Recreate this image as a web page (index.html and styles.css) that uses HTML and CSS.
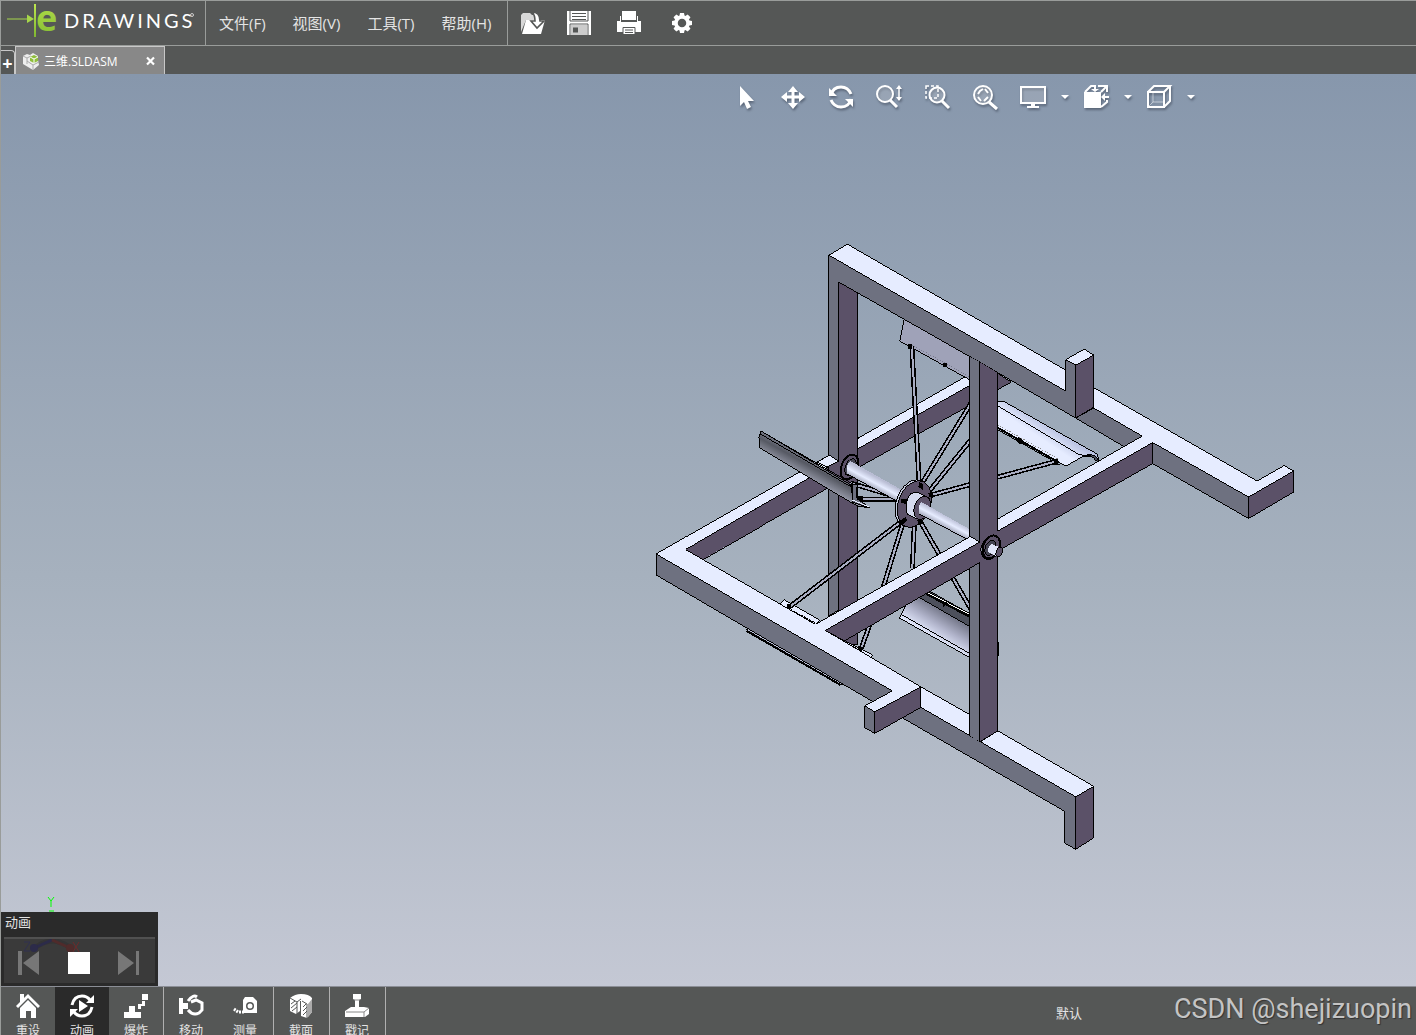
FILE: index.html
```html
<!DOCTYPE html>
<html lang="zh-CN">
<head>
<meta charset="utf-8">
<title>eDrawings - 三维.SLDASM</title>
<link rel="stylesheet" href="styles.css">
</head>
<body>
<div class="app">
<header class="menubar">
  <div class="logo">
    <svg width="204" height="44" viewBox="1 1 204 44" role="img" aria-label="eDrawings">
      <defs><linearGradient id="lime" x1="0" y1="0" x2="0" y2="1"><stop offset="0" stop-color="#bde64f"/><stop offset="1" stop-color="#7fb830"/></linearGradient></defs>
      <path d="M7 18.500h20v-4l7 4.500-7 4v-3.500H7z" fill="#a6d64a"/>
      <rect x="34" y="4" width="2" height="33" fill="url(#lime)"/>
      <text class="logo-e" x="36" y="31" fill="url(#lime)">e</text>
      <text class="logo-name" x="64" y="28">DRAWINGS</text>
      <circle cx="192" cy="15" r="1.500" fill="none" stroke="#ccc"/>
    </svg>
  </div>
  <nav class="menus">
    <button>文件(F)</button><button>视图(V)</button><button>工具(T)</button><button>帮助(H)</button>
  </nav>
  <div class="file-tools">
    <button aria-label="打开"><svg width="26" height="26" viewBox="0 0 26 26"><path d="M1 5l2-2h7l2 2h6v5H6L1 22z" fill="#d8d8d8"/><path d="M6 10h19l-4 14H2z" fill="#fff"/><path d="M12 2c6 0 8 3 8 9h4l-7 7-6-7h4c0-5-1-7-3-9z" fill="#fff" stroke="#555756" stroke-width="1.600"/></svg></button>
    <button aria-label="保存"><svg width="26" height="26" viewBox="0 0 26 26"><path d="M1 1h24v24H1z" fill="#fff"/><path d="M4 1v10h18V1M4 25V14h18v11" fill="none" stroke="#555756"/><path d="M6 3.500h14M6 6.500h14M6 9.500h14" stroke="#555756"/><path d="M5 15h16v10H5z" fill="#ccc"/><path d="M7 17.500h5v5H7z" fill="#555756"/></svg></button>
    <button aria-label="打印"><svg width="26" height="26" viewBox="0 0 26 26"><path d="M6 1h14v9H6zM1 11h3V6h1v5h16V6h1v5h3v11H1z" fill="#fff"/><path d="M5 11.500h16" stroke="#555756"/><path d="M7 17.500h12v7H7z" fill="#fff" stroke="#555756"/><path d="M9 20h8M9 22.500h8" stroke="#555756"/></svg></button>
    <button aria-label="选项"><svg width="24" height="24" viewBox="-12 -12 24 24"><g fill="#fff"><path id="tooth" d="M-2-10h4l1 5h-6zM-2 10h4l1-5h-6z"/><use href="#tooth" transform="rotate(45)"/><use href="#tooth" transform="rotate(90)"/><use href="#tooth" transform="rotate(135)"/></g><circle r="6" fill="none" stroke="#fff" stroke-width="3.500"/></svg></button>
  </div>
</header>
<div class="tabs">
  <button class="tab-add" aria-label="新建标签">+</button>
  <div class="tab">
    <svg width="18" height="18" viewBox="0 0 18 18"><path d="M1 4l4-2 3 1 3-2 5 3v4l1 5-6 5L1 12z" fill="#eee"/><path d="M1 4l4 2v6M5 6l4-2M5 9l6 4v5M11 13l6-3" fill="none" stroke="#aaa"/><path d="M8 5l4-2 4 2v4l-4 2-4-2z" fill="#8fbf3b"/><path d="M8 5l4 2 4-2M12 7v4" fill="none" stroke="#fff"/></svg>
    <span>三维.SLDASM</span>
    <button class="tab-close" aria-label="关闭"><svg width="10" height="10" viewBox="0 0 10 10"><path d="M1 1.500l7 7M8 1.500l-7 7" stroke="#fff" stroke-width="2.200"/></svg></button>
  </div>
</div>
<main class="viewport">
<svg class="model" viewBox="0 74 1416 912" preserveAspectRatio="xMidYMid meet" role="img" aria-label="三维模型">
  <defs>
    <linearGradient id="blade" gradientUnits="userSpaceOnUse" x1="814" y1="459" x2="803" y2="479"><stop offset="0" stop-color="#7a7d8c"/><stop offset=".35" stop-color="#565963"/><stop offset="1" stop-color="#a2a5b5"/></linearGradient>
    <linearGradient id="bladeR" gradientUnits="userSpaceOnUse" x1="1053" y1="425" x2="1043" y2="440"><stop offset="0" stop-color="#b4bddd"/><stop offset="1" stop-color="#e6ecff"/></linearGradient>
    <linearGradient id="bladeB" gradientUnits="userSpaceOnUse" x1="945" y1="613" x2="930" y2="637"><stop offset="0" stop-color="#777a8c"/><stop offset=".5" stop-color="#b0b3ca"/><stop offset="1" stop-color="#e6ecff"/></linearGradient>
    <linearGradient id="shaft" gradientUnits="userSpaceOnUse" x1="887" y1="483" x2="880" y2="496"><stop offset="0" stop-color="#b9bdd4"/><stop offset=".4" stop-color="#e6ecff"/><stop offset="1" stop-color="#7d8093"/></linearGradient>
    <linearGradient id="shaftR" gradientUnits="userSpaceOnUse" x1="947" y1="516" x2="940" y2="529"><stop offset="0" stop-color="#b9bdd4"/><stop offset=".4" stop-color="#e6ecff"/><stop offset="1" stop-color="#7d8093"/></linearGradient>
  </defs>
  <!-- rear beam -->
  <path class="top" d="M817 462l12-7 9 6 20-23L980 368V380L857 449 838 472z"/>
  <path class="side" d="M857 449L970 385 997 373 1011 382 857 468z"/>
  <path class="top" d="M655.500 554L829 455l9 6L685 549.500z"/>
  <path class="side" d="M685 549.500L838 461v21L702 559.500z"/>
  <!-- upper blade -->
  <path d="M904 318l-4.500 23 70.500 39v-30z" fill="#9fa2b8" class="edge"/>
  <path d="M912 345l58 32" fill="none" stroke="#777a8c" stroke-dasharray="1 1"/>
  <!-- rear post -->
  <path class="front" d="M828.500 255l10 10v345l-10 6z"/>
  <path class="side" d="M838.500 275h19v370h-19z"/>
  <path d="M829 486V458l9 4 19-24v31l-19 11z" fill="#5b5168"/>
  <path class="top" d="M817 462l12-7 9 6-11 6z"/>
  <path class="line" d="M828.500 487v129M838.500 483v127M857.500 438v10"/>
  <!-- right blade -->
  <path d="M997 401h6l94 53 2 8-7-6h-9l-17 10-6-3-63-36z" fill="url(#bladeR)" class="edge"/>
  <path class="line" d="M998 406l80 48 8 2M998 430l62 35"/>
  <path d="M1086 455q10-2 13 7l-4-2q-3-5-9-5z" fill="#4d505c" class="edge"/>
  <path d="M998 425l60 34" fill="none" stroke="#888" stroke-dasharray="1 1"/>
  <path d="M998 428l60 34" fill="none" stroke="#000" stroke-width="2"/>
  <!-- lower blade -->
  <path d="M918 597l11-6 41 23v15z" fill="#4d505c" class="edge"/>
  <path d="M926 593l44 23" fill="none" stroke="#000" stroke-width="4"/><path d="M928 593l42 22" fill="none" stroke="#fff"/>
  <path d="M918 597l52 30v31l-71-40 8-15z" fill="url(#bladeB)" class="edge"/>
  <path class="line" d="M902 615l68 39"/>
  <!-- lower-left blade -->
  <path d="M779 604l5-4 35 20-5 8zM846 642l26 13-3 5-26-11z" fill="#e6ecff" class="edge"/>
  <path d="M790 610l24 13M846 644l16 8" stroke="#000" fill="none" stroke-width="2" stroke-dasharray="2 1"/>
  <path d="M746 630l4-2 98 56-7 1z" fill="#b9bdd4" class="edge"/><path d="M746 631l94 54" stroke="#000" stroke-width="2"/>
  <!-- wheel disc, shaft and spokes -->
  <g class="spoke-edge"><path id="spokes" d="M911.500 346L919 487M972 401L920 486M972 438L929 491M1057 461L931 495M861 499h43M850 483l50 15M789 607L899 523M902 525L882 590 861 648M914 524l-2 44M919 520l52 90"/></g>
  <use class="spoke-face" href="#spokes"/>
  <ellipse cx="849" cy="467" rx="8" ry="13" transform="rotate(22 849 467)" fill="#5b5168" class="rim"/>
  <ellipse cx="850" cy="467" rx="5" ry="9" transform="rotate(22 850 467)" fill="#444452" class="edge"/>
  <path d="M850 461l64 36-6 11-61-34q-2-9 3-13z" fill="url(#shaft)"/><path class="line" d="M847 474l55 30"/>
  <ellipse cx="911" cy="503" rx="15" ry="24" transform="rotate(20 911 503)" fill="#c3c9dd" class="edge"/>
  <ellipse cx="914" cy="504" rx="16" ry="24" transform="rotate(20 914 504)" fill="#5b5168" class="edge"/>
  <path d="M910 494q5-3 9-1l10 5q-1 18-12 21l-10-5q-4-10 3-20z" fill="#d6dbef" class="edge"/>
  <ellipse cx="922" cy="508" rx="8" ry="12" transform="rotate(20 922 508)" fill="#5b5168" class="edge"/>
  <path d="M921 502l55 31-5 10-52-29q-2-8 2-12z" fill="url(#shaftR)"/><path class="line" d="M919 514l51 27"/>
  <path d="M918 487l1-5 4 2v6zM928 493l5-1v6l-4-1zM901 499h6v5l-6-1zM898 522l7-5 2 3-5 5zM917 520h5v4h-4zM908 344h4v5h-4zM943 363h4v4h-4zM787 604h4v5h-4zM858 646l5 1-1 4h-4zM1053 459h5v6h-4zM1018 437l5 3-2 5-4-3zM858 496h5v5h-5zM942 601l6 2-5 4zM997 642h2v14h-2z"/>
  <!-- left blade -->
  <path d="M760.500 431l-2 6 1 11 92 55 6 3 12 2-17-9-2-14z" fill="url(#blade)" class="edge"/>
  <path class="line" d="M760 434l91 53M760.500 431l92 53"/>
  <path d="M852 484v18l18 6-13-9q-3-8 1-15z" fill="#6e7180" class="edge"/><path d="M852 500l17 7" stroke="#e6ecff"/>
  <!-- upper cross beam -->
  <path class="top" d="M828.500 255L847 244 1065.500 370V391z"/>
  <path class="front" d="M828.500 255L1065.500 391V359.500l10 5.500v53L979.500 362 969.500 356.500 838.500 282V294l-10 3z"/>
  <path d="M829 290h9v25h-9z" fill="#6e7180"/>
  <path class="line" d="M828.500 255v70M838.500 282v40"/>
  <path class="top" d="M1065.500 359.500L1084 349l9.500 6-18 10z"/>
  <path class="side" d="M1075.500 365l18-10v52l-18 11z"/>
  <!-- right frame -->
  <path class="front" d="M1075.500 418l18-10 49 28-18 11z"/>
  <path class="top" d="M1093.500 387.500L1257 481l27-15.500 9.500 5.500-45 26-96-54.500-155 89V519L1142 436l-48.500-28z"/>
  <path class="side" d="M1152.500 442.500v21L997.500 551v-20z"/>
  <path class="front" d="M1152.500 442.500l96 54.500v21.500l-96-55z"/>
  <path class="side" d="M1248.500 497l45-26v21l-45 26.500z"/>
  <!-- lower beams -->
  <path class="front" d="M902 718l18.500-10.500L1075.500 797v52.500l-11-6v-32z"/>
  <path class="top" d="M920.500 687L970 715l10 27 17.500-11 96 55.500-18 10.500-155-89.500z"/>
  <path class="side" d="M1075.500 797l18-10.500V838l-18 11.500z"/>
  <!-- front post -->
  <path d="M969.500 357l10 5v380l-10-6z" fill="#6e7180"/>
  <path d="M979.500 362l18 11v358l-18 11z" fill="#5b5168"/>
  <path class="line" d="M969.500 357v379M979.500 362v380M997.500 373v158M997.500 551v180M979.500 742l18-11"/>
  <!-- middle beam -->
  <path class="side" d="M825 630.500L979.500 542v20.500L844 641z"/>
  <path d="M979 542l18-11v20l-18 11z" fill="#5b5168"/>
  <path class="top" d="M815 624.500l155-88 9.500 5.500L825 630.500z"/>
  <!-- long left beam -->
  <path class="front" d="M655.500 554L892 691l-19 11-217.500-127z"/>
  <path d="M655.500 554L685 537l10 7-10 5.500L815 624.500h5l5 6L920.500 687l-46 25-10-6L892 691z" fill="#e6ecff"/>
  <path class="line" d="M655.500 554L685 537M694 544.500l-9 5L815 624.500M825 630.500L920.500 687l-46 25-10-6L892 691 655.500 554"/>
  <path class="side" d="M874.500 712l46-25v20.500l-46 26z"/>
  <path class="front" d="M864.500 706l10 6v21.500l-10-5.500z"/>
  <!-- end bearing -->
  <ellipse cx="990" cy="548" rx="9" ry="12" transform="rotate(22 990 548)" fill="#8a8d9f" class="edge"/>
  <ellipse cx="991" cy="547" rx="8" ry="12" transform="rotate(22 991 547)" fill="#5b5168" class="rim"/>
  <ellipse cx="990" cy="548" rx="5" ry="8" transform="rotate(22 990 548)" fill="#444452" class="edge"/>
  <path d="M991 544l10 4-3 9-10-5q-1-5 3-8z" fill="#dfe4f8"/><ellipse cx="999" cy="552" rx="3" ry="5" transform="rotate(20 999 552)" fill="#5b5168" class="edge"/>
</svg>
<div class="view-tools">
  <button aria-label="选择"><svg width="28" height="28" viewBox="0 0 28 28"><path d="M9 3v20l4-4 3 7 4-2-3-6h6z"/></svg></button>
  <button aria-label="平移"><svg width="28" height="28" viewBox="0 0 28 28"><path d="M14 3l5 6h-3.500v3.500H20V9l6 5-6 5v-3.500h-4.500V20H19l-5 6-5-6h3.500v-4.500H8V19l-6-5 6-5v3.500h4.500V9H9z"/></svg></button>
  <button aria-label="旋转"><svg width="28" height="28" viewBox="0 0 28 28"><g class="outline" stroke-width="3"><path d="M4 12q2-8 10-8 7 0 10 7M24 16q-2 8-10 8-7 0-10-7"/></g><path d="M2 5v8h8zM26 24v-8h-8z"/></svg></button>
  <button aria-label="缩放"><svg width="28" height="28" viewBox="0 0 28 28"><circle cx="10" cy="11" r="8" class="lens"/><path class="outline" stroke-width="3" d="M15 17l7 7"/><path class="outline" stroke-width="1.500" d="M24 4v13"/><path d="M24 2l3 4h-6zM24 18l3-4h-6z"/></svg></button>
  <button aria-label="局部放大"><svg width="28" height="28" viewBox="0 0 28 28"><path class="outline" stroke-width="1.500" stroke-dasharray="3 2" d="M3 3h12v12H3z"/><circle cx="14" cy="12" r="7.500" class="lens"/><path class="outline" stroke-width="3" d="M19 18l7 7"/></svg></button>
  <button aria-label="整屏显示"><svg width="28" height="28" viewBox="0 0 28 28"><circle cx="12" cy="12" r="9" class="lens"/><path class="outline" stroke-width="3" d="M18 19l8 7"/><path class="outline" stroke-width="2" d="M7 11l2-3 3-2M14 6l3 4M7 14l3 4M13 18l4-4"/></svg></button>
  <div class="drop"><button aria-label="显示模式"><svg width="28" height="28" viewBox="0 0 28 28"><path class="lens" d="M2 4h24v16H2z"/><path d="M12 20h4v3h4v2H8v-2h4z"/></svg></button><button class="caret" aria-label="展开"></button></div>
  <div class="drop"><button aria-label="视图方向"><svg width="28" height="28" viewBox="0 0 28 28"><path d="M2 9h17v16H2z"/><path class="outline" stroke-width="2" d="M3 9l6-6h3M16 3h9v6M25 17v2l-6 5M19 9l6-6"/><path d="M12 2h2v4h3l-4 3-4-3h3zM27 13v2h-4v3l-4-4 4-4v3z"/></svg></button><button class="caret" aria-label="展开"></button></div>
  <div class="drop"><button aria-label="显示样式"><svg width="28" height="28" viewBox="0 0 28 28"><path class="outline" stroke-width="2" d="M3 9h16v15H3zM3 9l6-6h16l-6 6M25 3v15l-6 6"/><path class="outline" d="M8 9v10h11M8 19l-5 5" opacity=".5"/></svg></button><button class="caret" aria-label="展开"></button></div>
</div>
<svg class="triad" width="20" height="20" viewBox="0 0 20 20" role="img" aria-label="Y"><path d="M7 3l3 4 3-4M10 7v6M8 17h5" stroke="#0f0" fill="none"/></svg>
<section class="anim">
  <h2>动画</h2>
  <div class="player">
    <svg class="axes" width="60" height="18" viewBox="0 0 60 18" aria-hidden="true"><path d="M12 10Q30-6 50 10" stroke="#343435" stroke-width="5" fill="none"/><path d="M2 3h6L2 12h6" stroke="#303050" fill="none"/><path d="M12 9l18-8" stroke="#2c2b49" stroke-width="3"/><path d="M30 1l18 8" stroke="#4f2b2b" stroke-width="3"/><circle cx="12" cy="9" r="4" fill="#2c2b49"/><circle cx="48" cy="9" r="4" fill="#4f2b2b"/><path d="M51 3l6 10M57 3l-6 10" stroke="#6d2a2a"/></svg>
    <button aria-label="上一步"><svg width="24" height="24" viewBox="0 0 24 24" fill="#777"><path d="M1 0h4v24H1zM22 0v24L6 12z"/></svg></button>
    <button aria-label="停止"><svg width="24" height="24" viewBox="0 0 24 24"><path d="M1 1h22v22H1z" fill="#fff"/></svg></button>
    <button aria-label="下一步"><svg width="24" height="24" viewBox="0 0 24 24" fill="#777"><path d="M19 0h3v24h-3zM1 0v24l16-12z"/></svg></button>
  </div>
</section>
</main>
<footer class="toolbar">
  <div class="group">
    <button><svg width="26" height="26" viewBox="0 0 26 26"><path d="M13 1l12 12-2 2L13 5 3 15l-2-2 4-4V1h4v4z"/><path d="M13 7l8 8v10h-5v-7h-5v7H5V15z"/></svg>重设</button>
    <button class="active"><svg width="26" height="26" viewBox="0 0 26 26"><path class="outline" stroke-width="3" d="M3 12q2-9 10-9 5 0 8 4M23 14q-2 9-10 9-5 0-8-4"/><path d="M25 2v8h-8zM1 24v-8h8zM10 7l9 6-9 6z"/></svg>动画</button>
    <button><svg width="26" height="26" viewBox="0 0 26 26"><path d="M1 19h5v-6h6v6h6v6H1zM19 1h6v6h-6zM15 16v-5h4V8h3v5h-4v3z"/></svg>爆炸</button>
  </div>
  <div class="group">
    <button><svg width="26" height="26" viewBox="0 0 26 26"><path d="M1 5h4v5h5v6H5v5H1z"/><path class="outline" stroke-width="3" d="M10 8q5-7 9-4M10 17q5 6 11 3l3-3v-7l-6-3-5 2"/></svg>移动</button>
    <button><svg width="26" height="26" viewBox="0 0 26 26"><path d="M11 7l2-3h8l4 4v12H11z"/><circle cx="18" cy="13" r="4" fill="#555756"/><circle cx="18" cy="13" r="2.500"/><path class="outline" stroke-width="3" stroke-dasharray="2 1" d="M2 16l4 3h6"/></svg>测量</button>
  </div>
  <div class="group">
    <button><svg width="26" height="26" viewBox="0 0 26 26"><path d="M2 5q5-4 11-4 8 0 11 4v14l-5 6-6-2V8h-1v10l-4 3-6-3z"/><path d="M2 5l7 4v12M9 9l4-3M14 8l5 3v14M3 11l4-3M3 15l6-5M4 18l5-4M15 14l3-3M15 18l4-4M15 22l4-4" stroke="#555756" fill="none"/><path d="M20 11l4-5v13l-4 5z" fill="#aaa"/></svg>截面</button>
  </div>
  <div class="group">
    <button><svg width="26" height="26" viewBox="0 0 26 26"><path d="M9 1h8v5l-2 1v7h5l5 1v6l-4 3H1v-6l6-4h4V7L9 6z"/><path d="M2 19h18l5-4M20 19v5M10 7h6" stroke="#888" fill="none"/></svg>戳记</button>
  </div>
  <span class="config">默认</span>
  <span class="mark">CSDN @shejizuopin</span>
</footer>
</div>
</body>
</html>
```

FILE: styles.css
```css
* { box-sizing: border-box; }
body {
  margin: 0;
  font-family: "Open Sans", "Noto Sans CJK SC", sans-serif;
  color: #e4e4e4;
  background: #555756;
}
button {
  padding: 0;
  border: 0;
  background: none;
  color: inherit;
  font: inherit;
}
svg { display: block; }
.app {
  display: flex;
  flex-direction: column;
  height: 100vh;
  overflow: hidden;
  border-top: 1px solid #999c9a;
  border-left: 1px solid #999c9a;
}
.menubar {
  display: flex;
  flex: none;
  height: 45px;
  border-bottom: 1px solid #999c9a;
}
.logo { border-right: 1px solid #999c9a; }
.logo svg { overflow: visible; }
.logo-e { font: bold 36px "Open Sans", sans-serif; }
.logo-name { font: 20px Lato, sans-serif; letter-spacing: 3px; fill: #fff; }
.menus {
  display: flex;
  gap: 27px;
  padding: 0 16px 2px 13px;
  border-right: 1px solid #999c9a;
  font-size: 15px;
}
.file-tools {
  display: grid;
  grid-template-columns: 46px 50px 54px 24px;
  align-items: center;
  padding-left: 12px;
}
.tabs {
  display: flex;
  flex: none;
  height: 28px;
  font-size: 12px;
}
.tab-add {
  width: 14px;
  height: 24px;
  margin-top: 4px;
  border-top: 1px solid #c8c8c8;
  border-right: 1px solid #c8c8c8;
  border-radius: 0 4px 0 0;
  color: #fff;
  font-size: 18px;
  font-weight: bold;
  line-height: 24px;
}
.tab {
  display: flex;
  align-items: center;
  gap: 4px;
  width: 150px;
  padding: 0 8px 0 6px;
  border: 1px solid #c8c8c8;
  border-bottom: 0;
  background: #888;
  color: #fff;
}
.tab-close { margin-left: auto; }
.viewport {
  position: relative;
  flex: 1;
  min-height: 0;
  background: linear-gradient(#8797ac, #a6b1be 55%, #c4c8d4);
}
.model { width: 100%; height: 100%; shape-rendering: crispEdges; }
.top, .front, .side, .edge { stroke: #000; }
.top { fill: #e6ecff; }
.front { fill: #6e7180; }
.side { fill: #5b5168; }
.line { fill: none; stroke: #000; }
.rim { stroke: #000; stroke-width: 2px; }
.spoke-edge { fill: none; stroke: #000; stroke-width: 5px; }
.spoke-face { fill: none; stroke: #a9adc2; stroke-width: 2px; }
.spoke-edge path { stroke-width: inherit; }
.view-tools {
  position: absolute;
  top: 3px;
  right: 15.4%;
  display: flex;
  height: 40px;
  filter: drop-shadow(1px 2px 1px #5a6678);
}
.view-tools > button { display: grid; width: 48px; place-items: center; }
.view-tools svg { fill: #fff; }
.outline { fill: none; stroke: #fff; }
.lens { fill: #ffffff33; stroke: #fff; stroke-width: 2px; }
.drop { display: flex; align-items: center; width: 63px; padding-left: 10px; }
.caret {
  margin-left: 14px;
  border: 4px solid transparent;
  border-top-color: #fff;
  border-bottom: 0;
}
.triad { position: absolute; left: 40px; bottom: 72px; }
.anim {
  position: absolute;
  left: 0;
  bottom: 0;
  width: 157px;
  padding: 0 3px 3px;
  background: #2a2a2a;
}
.anim h2 {
  margin: 0;
  padding: 0 0 4px 1px;
  font-size: 13px;
  font-weight: normal;
  line-height: 21px;
}
.player {
  position: relative;
  display: flex;
  align-items: center;
  justify-content: space-between;
  height: 46px;
  padding: 4px 14px 0 13px;
  border-top: 2px solid #505050;
  background: #3a3a3a;
}
.player button { position: relative; }
.axes { position: absolute; left: 18px; top: 0; }
.toolbar {
  display: flex;
  flex: none;
  height: 49px;
  overflow: hidden;
  border-top: 1px solid #8b8e96;
  font-size: 12px;
}
.group { display: flex; border-right: 1px solid #b0b0b0; }
.group + .group { padding-right: 1px; }
.group button {
  display: flex;
  flex-direction: column;
  align-items: center;
  width: 54px;
  height: 64px;
  padding-top: 6px;
  line-height: 20px;
}
.group svg { fill: #fff; margin-bottom: 2px; }
.active { background: #2a2a2a; }
.config { margin-left: auto; font-size: 13px; line-height: 52px; }
.mark {
  margin: 0 4px 0 92px;
  font: 27px/44px Roboto, sans-serif;
  color: #c4c4c4;
  text-shadow: 1px 1px 1px #333;
}
```
